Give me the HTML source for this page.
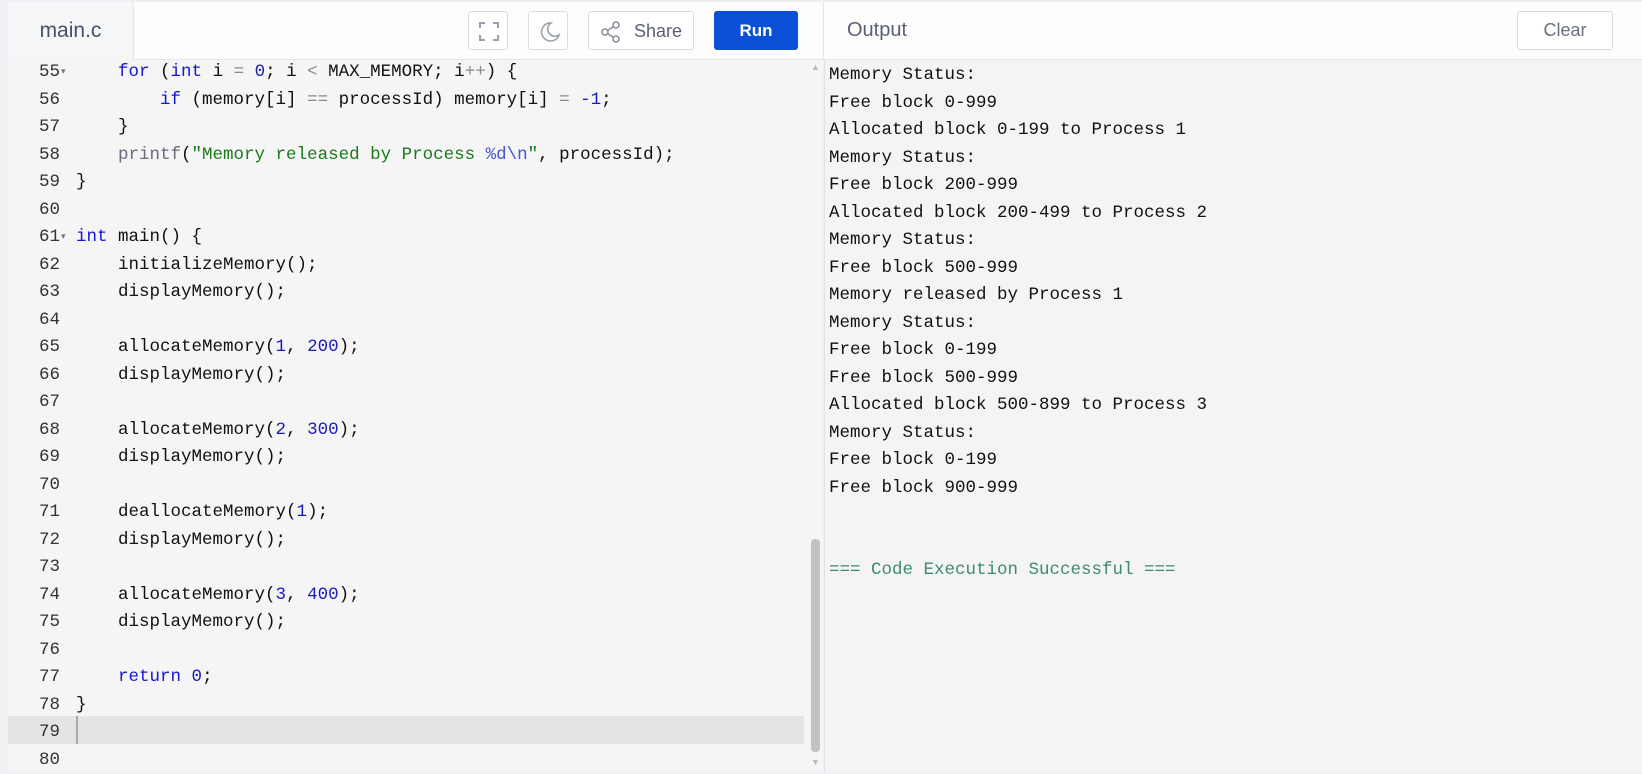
<!DOCTYPE html>
<html><head><style>
*{margin:0;padding:0;box-sizing:border-box}
body{width:1642px;height:772px;overflow:hidden;background:#eef0f4;font-family:"Liberation Sans",sans-serif;position:relative}
.hdr{position:absolute;left:8px;top:2px;width:1634px;height:58px;background:#fdfdfd;border-bottom:1px solid #e3e5ea}
.tab{position:absolute;left:8px;top:2px;width:126px;height:58px;background:#f5f6f8;color:#4a5068;font-size:21px;font-weight:500;line-height:58px;text-align:center;border-right:1px solid #e3e5ea}
.btn{position:absolute;top:11px;height:39px;border:1px solid #d8dbe2;border-radius:3px;background:#fff}
.run{position:absolute;left:714px;top:11px;width:84px;height:39px;background:#0a4fd6;color:#fff;font-weight:bold;font-size:17px;text-align:center;line-height:39px;border-radius:3px}
.ed{position:absolute;left:8px;top:60px;width:815px;height:712px;background:#f5f5f5}
.out{position:absolute;left:824px;top:60px;width:818px;height:712px;background:#f4f4f4;border-left:1px solid #e0e2e6}
.code{position:absolute;top:59px;font-family:"Liberation Mono",monospace;font-size:17.5px;line-height:27.5px;white-space:pre}
.ln{left:8px;width:52px;text-align:right;color:#333}
.src{left:76px;color:#111}
.k{color:#1515d4}.n{color:#1a1ab8}.s{color:#1a7a1a}.f{color:#6a6a80}.o{color:#888}.e{color:#4455dd}
.o2{left:829px;color:#111}
.fold{position:absolute;left:61px;font-size:9px;color:#777}
</style></head><body>
<div class="hdr"></div>
<div class="tab">main.c</div>
<div class="btn" style="left:468px;width:40px"><svg width="40" height="39" viewBox="0 0 40 39"><path d="M11 16v-5h5M24 11h5v5M29 23v5h-5M16 28h-5v-5" fill="none" stroke="#9aa0ae" stroke-width="2"/></svg></div>
<div class="btn" style="left:528px;width:40px"><svg width="40" height="39" viewBox="0 0 40 39"><path d="M22 11a9 9 0 1 0 8 12a7 7 0 0 1-8-12z" fill="none" stroke="#9aa0ae" stroke-width="1.6"/></svg></div>
<div class="btn" style="left:588px;width:106px"><svg style="position:absolute;left:10px;top:8px" width="24" height="24" viewBox="0 0 24 24"><circle cx="17" cy="5" r="3" fill="none" stroke="#8a90a0" stroke-width="1.6"/><circle cx="6" cy="12" r="3" fill="none" stroke="#8a90a0" stroke-width="1.6"/><circle cx="17" cy="19" r="3" fill="none" stroke="#8a90a0" stroke-width="1.6"/><path d="M8.6 10.5l5.8-4M8.6 13.5l5.8 4" stroke="#8a90a0" stroke-width="1.6"/></svg><span style="position:absolute;left:45px;top:9px;font-size:18px;color:#5a6072">Share</span></div>
<div class="run">Run</div>
<div style="position:absolute;left:823px;top:2px;width:1px;height:58px;background:#e3e5ea"></div>
<div style="position:absolute;left:847px;top:19px;font-size:20px;color:#5a6072">Output</div>
<div class="btn" style="left:1517px;width:96px;text-align:center;line-height:37px;font-size:18px;color:#6a7080">Clear</div>
<div class="ed"></div>
<div style="position:absolute;left:8px;top:716px;width:796px;height:28px;background:#e4e4e4"></div>
<div style="position:absolute;left:76px;top:716px;width:2px;height:28px;background:#aaa"></div>
<div style="position:absolute;left:811px;top:539px;width:9px;height:213px;background:#c2c2c2;border-radius:4px"></div>
<div style="position:absolute;left:811px;top:62px;font-size:9px;color:#bbb">▲</div>
<div style="position:absolute;left:811px;top:757px;font-size:9px;color:#bbb">▼</div>
<div class="out"></div>
<div class="fold" style="top:66px">▾</div>
<div class="fold" style="top:231px">▾</div>
<div class="code ln">55
56
57
58
59
60
61
62
63
64
65
66
67
68
69
70
71
72
73
74
75
76
77
78
79
80</div>
<div class="code src">    <span class="k">for</span> (<span class="k">int</span> i <span class="o">=</span> <span class="n">0</span>; i <span class="o">&lt;</span> MAX_MEMORY; i<span class="o">++</span>) {
        <span class="k">if</span> (memory[i] <span class="o">==</span> processId) memory[i] <span class="o">=</span> <span class="n">-1</span>;
    }
    <span class="f">printf</span>(<span class="s">"Memory released by Process </span><span class="e">%d\n</span><span class="s">"</span>, processId);
}

<span class="k">int</span> main() {
    initializeMemory();
    displayMemory();

    allocateMemory(<span class="n">1</span>, <span class="n">200</span>);
    displayMemory();

    allocateMemory(<span class="n">2</span>, <span class="n">300</span>);
    displayMemory();

    deallocateMemory(<span class="n">1</span>);
    displayMemory();

    allocateMemory(<span class="n">3</span>, <span class="n">400</span>);
    displayMemory();

    <span class="k">return</span> <span class="n">0</span>;
}</div>
<div class="code o2" style="top:62px">Memory Status:
Free block 0-999
Allocated block 0-199 to Process 1
Memory Status:
Free block 200-999
Allocated block 200-499 to Process 2
Memory Status:
Free block 500-999
Memory released by Process 1
Memory Status:
Free block 0-199
Free block 500-999
Allocated block 500-899 to Process 3
Memory Status:
Free block 0-199
Free block 900-999


<span style="color:#3f8a70">=== Code Execution Successful ===</span></div>
</body></html>
